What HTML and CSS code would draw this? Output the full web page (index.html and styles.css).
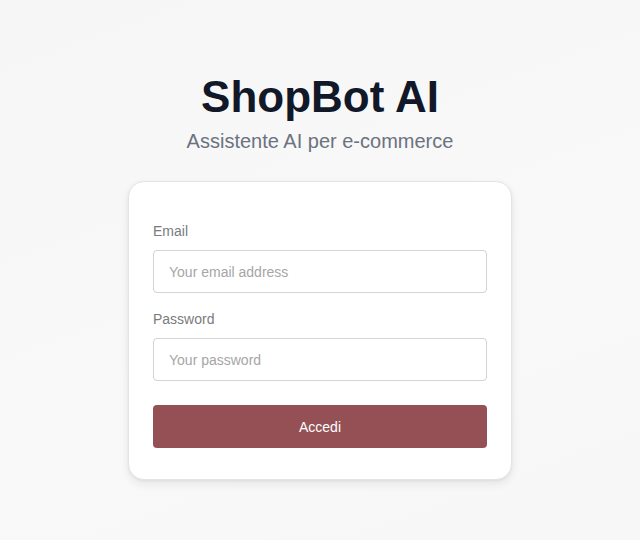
FILE: index.html
```html
<!DOCTYPE html>
<html lang="it">
<head>
<meta charset="utf-8">
<title>ShopBot AI</title>
<link rel="stylesheet" href="styles.css">
</head>
<body>
<main class="page">
  <header class="hero">
    <h1 class="title">ShopBot AI</h1>
    <p class="subtitle">Assistente AI per e-commerce</p>
  </header>
  <form class="card">
    <div class="field">
      <label class="label" for="email">Email</label>
      <input class="input" id="email" type="email" placeholder="Your email address">
    </div>
    <div class="field">
      <label class="label" for="password">Password</label>
      <input class="input" id="password" type="password" placeholder="Your password">
    </div>
    <button class="button" type="button">Accedi</button>
  </form>
</main>
</body>
</html>
```
FILE: styles.css
```css
* { box-sizing: border-box; }
html, body { margin: 0; height: 100%; }
body {
  background: linear-gradient(160deg, #f6f6f7 0%, #f9f9fa 60%, #f8f7f7 100%);
  font-family: "Liberation Sans", Arial, sans-serif;
}
.page {
  display: flex;
  flex-direction: column;
  align-items: center;
  padding-top: 71px;
}
.hero { text-align: center; }
.title {
  margin: 0;
  font-size: 44px;
  line-height: 52px;
  font-weight: 700;
  color: #111827;
}
.subtitle {
  margin: 6px 0 0;
  font-size: 20px;
  line-height: 24px;
  color: #6b7280;
}
.card {
  margin-top: 28px;
  width: 384px;
  background: #fff;
  border: 1px solid #e4e4e6;
  border-radius: 16px;
  padding: 39px 24px 31px;
  box-shadow: 0 4px 10px rgba(0, 0, 0, 0.08), 0 1px 3px rgba(0, 0, 0, 0.05);
  display: flex;
  flex-direction: column;
}
.field { display: flex; flex-direction: column; margin-bottom: 16px; }
.label {
  font-size: 14px;
  line-height: 21px;
  color: #7b7b7b;
  margin-bottom: 8px;
}
.input {
  height: 43px;
  border: 1px solid #d4d4d4;
  border-radius: 4px;
  padding: 0 15px;
  font-family: "Liberation Sans", Arial, sans-serif;
  font-size: 14px;
  color: #333;
  background: #fff;
  outline: none;
}
.input::placeholder { color: #a6a6a6; }
.button {
  margin-top: 8px;
  height: 43px;
  border: none;
  border-radius: 4px;
  background: #955055;
  color: #fff;
  font-family: "Liberation Sans", Arial, sans-serif;
  font-size: 14px;
  cursor: pointer;
}
```
